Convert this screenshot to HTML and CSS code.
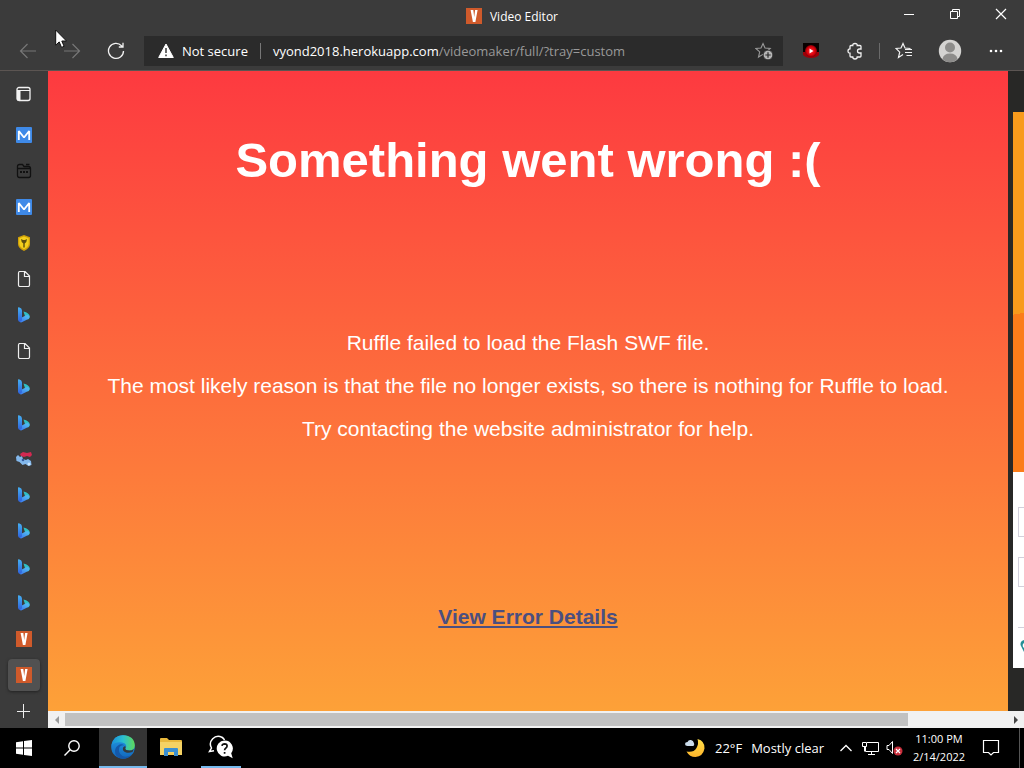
FILE: index.html
```html
<!DOCTYPE html>
<html lang="en">
<head>
<meta charset="utf-8">
<title>Video Editor</title>
<link rel="stylesheet" href="styles.css">
</head>
<body>
<svg class="sprite" aria-hidden="true">
  <defs>
    <linearGradient id="bing-a" x1="0" y1="0" x2="0" y2="1"><stop offset="0" stop-color="#45b0f2"/><stop offset="1" stop-color="#2f62dc"/></linearGradient>
    <linearGradient id="bing-b" x1="0" y1="1" x2="1" y2="0"><stop offset="0" stop-color="#3f86f0"/><stop offset="1" stop-color="#4fb4f0"/></linearGradient>
    <linearGradient id="edge-a" x1="0" y1="0" x2="1" y2="0"><stop offset="0" stop-color="#1a8fdc"/><stop offset=".5" stop-color="#2bbfd0"/><stop offset="1" stop-color="#5fd958"/></linearGradient>
    <linearGradient id="edge-b" x1="0" y1="0" x2="0" y2="1"><stop offset="0" stop-color="#2298e4"/><stop offset="1" stop-color="#1268bd"/></linearGradient>
    <linearGradient id="moon-a" x1="0" y1="0" x2="0" y2="1"><stop offset="0" stop-color="#ffe04a"/><stop offset="1" stop-color="#ffb52b"/></linearGradient>
    <radialGradient id="yt-a"><stop offset="0" stop-color="#ff2a30"/><stop offset=".7" stop-color="#d8000b"/><stop offset="1" stop-color="#7b0008"/></radialGradient>
  </defs>
  <symbol id="i-v" viewBox="0 0 16 16"><path fill="#cf5a2b" d="M0 0h16v16H0z"/><path fill="#fff" d="M4.6 2h2.700l.9 7 .9-7h2.500L9.400 14H6.900z"/></symbol>
  <symbol id="i-m" viewBox="0 0 16 16"><rect width="16" height="16" rx="1" fill="#3f8ae8"/><path d="M2.800 13V4L8 10.500 13.200 4v9" fill="none" stroke="#fff" stroke-width="1.800" stroke-linejoin="bevel"/></symbol>
  <symbol id="i-cal" viewBox="0 0 16 16"><path d="M1.500 3.500q0-2 2-2h3l1.500 2h4.500q2 0 2 2v7q0 2-2 2h-9q-2 0-2-2zM1.500 5.500H14M10 1.500h3.500" fill="none" stroke="#111" stroke-width="1.300"/><path d="M4 8h2v2H4zM7 8h2v2H7zM10 8h2v2h-2z" fill="#111"/></symbol>
  <symbol id="i-shield" viewBox="0 0 16 16"><path d="M8 0l6 2.300V9q0 4-6 7-6-3-6-7V2.300z" fill="#d0a009"/><path d="M8 1.500l4.700 1.800v5.500q0 3.200-4.700 5.500-4.700-2.300-4.700-5.500V3.300z" fill="#f3cf1d"/><path d="M5 4l2 1h2l2-1-.7 3L8.700 8.500v4H7.300v-4L5.700 7z" fill="#5b4d10"/></symbol>
  <symbol id="i-doc" viewBox="0 0 16 16"><path d="M2.500 2q0-1.500 1.500-1.500h5L13.500 5v9q0 1.500-1.500 1.500H4q-1.500 0-1.500-1.500zM8.500.5V5.500h5" fill="none" stroke="#eee" stroke-width="1.200"/></symbol>
  <symbol id="i-bing" viewBox="0 0 16 16"><path d="M7.500 4.500q5.800 1.500 6.300 4.700.3 2.300-2 3.600-.1-2.500-2.800-3.600z" fill="#2fc0c4"/><path d="M5.300 13.200l5.900-3.100" stroke="url(#bing-b)" stroke-width="4.200" stroke-linecap="round"/><path d="M2 .8Q2 0 3 .2q3 .8 3 3v9.300q0 2.300-2 2.300T2 12.500z" fill="url(#bing-a)"/></symbol>
  <symbol id="i-gem" viewBox="0 0 16 16"><path d="M0 6l2-2 2 2 2-1 1 3 3 1 2-1 3 2 .5 4-3 1-3-2-3 1-3-3-3-1z" fill="#83b8ec"/><path d="M4 3l3-2 4 1 4-1 1 3-2 2-3-1-3 1-3-1z" fill="#d32951"/><circle cx="13" cy="13" r="1.500" fill="#c9e6ff"/><circle cx="7" cy="9" r="1.300" fill="#345b9e"/></symbol>
</svg>

<div class="window">
  <header class="titlebar">
    <h1 class="window-title"><svg class="icon16"><use href="#i-v"/></svg>Video Editor</h1>
    <div class="window-controls">
      <button aria-label="Minimize"><svg width="12" height="12" viewBox="0 0 12 12"><path d="M1 6.500h10" stroke="#fff"/></svg></button>
      <button aria-label="Restore"><svg width="12" height="12" viewBox="0 0 12 12" fill="none" stroke="#fff"><path d="M1.500 3.500h7v7h-7zM3.500 3V1.500h7v7H9"/></svg></button>
      <button aria-label="Close"><svg width="12" height="12" viewBox="0 0 12 12"><path d="M1 1l10 10M11 1L1 11" stroke="#fff" stroke-width="1.200"/></svg></button>
    </div>
  </header>

  <nav class="toolbar" aria-label="Browser toolbar">
    <button aria-label="Back"><svg width="18" height="18" viewBox="0 0 18 18" fill="none" stroke="#777" stroke-width="1.200"><path d="M17 9H1.500M8.500 2L1.500 9l7 7"/></svg></button>
    <button aria-label="Forward"><svg width="18" height="18" viewBox="0 0 18 18" fill="none" stroke="#777" stroke-width="1.200"><path d="M1 9h15.500M9.500 2l7 7-7 7"/></svg></button>
    <button aria-label="Refresh"><svg width="18" height="18" viewBox="0 0 18 18" fill="none" stroke="#f2f2f2" stroke-width="1.300"><path d="M16.500 9A7.500 7.500 0 1 1 14.500 3.800L16 5M16 .8V5h-4.200"/></svg></button>
    <div class="address">
      <svg width="16" height="16" viewBox="0 0 16 16"><path d="M8 1l7.300 13.500H.7z" fill="#fff" stroke="#fff" stroke-linejoin="round"/><path d="M8 5v5M8 11.500v1.700" stroke="#2b2b2b" stroke-width="1.400"/></svg>
      <span class="security">Not secure</span>
      <span class="url"><b>vyond2018.herokuapp.com</b>/videomaker/full/?tray=custom</span>
      <button aria-label="Add to favorites"><svg width="18" height="18" viewBox="0 0 18 18"><path d="M8 1.500l2 4.500 5.200.5-3.900 3.400 1.200 5L8 12.300 3.500 15l1.200-5.100L.8 6.500 6 6z" fill="none" stroke="#999" stroke-width="1.100"/><circle cx="13" cy="13" r="4.800" fill="#b5b5b5" stroke="#2b2b2b" stroke-width=".8"/><path d="M13 10.300v5.400M10.300 13h5.400" stroke="#2b2b2b" stroke-width="1.200"/></svg></button>
    </div>
    <button aria-label="Video extension"><svg width="16" height="18" viewBox="0 0 16 18"><path fill="#080000" d="M0 1h16v10H0z"/><path fill="#9c0008" d="M0 10h16v3q-3 3-8 3t-8-3z"/><circle cx="8" cy="9" r="6" fill="url(#yt-a)"/><path d="M6.500 6.500v5L10.500 9z" fill="#fff"/></svg></button>
    <button aria-label="Extensions"><svg width="16" height="18" viewBox="0 0 16 18"><path d="M4 3.500h1.800Q5.600 1.500 8 1.500t2.200 2H13q1 0 1 1V7h-1.500Q10.500 7 10.500 9t2 2H14v3q0 1-1 1h-2.800q0 2-2.200 2t-2.200-2H4q-1 0-1-1v-2.800Q1 11.200 1 9t2-2.200V4.500q0-1 1-1z" fill="none" stroke="#f2f2f2" stroke-width="1.300"/></svg></button>
    <span class="divider"></span>
    <button aria-label="Favorites"><svg width="18" height="18" viewBox="0 0 18 18" fill="none" stroke="#f2f2f2" stroke-width="1.200"><path d="M15.500 6.500L10 6 8 1.500 6 6 1 6.500l3.700 3.600L3.500 15.500 8 12.500M10 7.500h7M10 10.500h7M11.500 13.500H17"/></svg></button>
    <button class="profile" aria-label="Profile"><svg width="24" height="24" viewBox="0 0 24 24"><circle cx="12" cy="12" r="11.200" fill="#d4d3d1"/><circle cx="12" cy="8.500" r="5" fill="#8d8c8a"/><path d="M4.500 20q1-5.500 7.500-5.500t7.500 5.500q-3 3.200-7.500 3.200T4.500 20z" fill="#8d8c8a"/></svg></button>
    <button aria-label="Settings and more"><svg width="14" height="4" viewBox="0 0 14 4" fill="#fff"><circle cx="2" cy="2" r="1.300"/><circle cx="7" cy="2" r="1.300"/><circle cx="12" cy="2" r="1.300"/></svg></button>
  </nav>

  <div class="workspace">
    <aside class="tabs" aria-label="Vertical tabs">
      <button class="tab-menu" aria-label="Tab actions"><svg width="16" height="16" viewBox="0 0 16 16"><rect x="1" y="1.500" width="13" height="13" rx="2" fill="none" stroke="#f2f2f2" stroke-width="1.300"/><path d="M1 4.500h13" stroke="#f2f2f2"/><path d="M1 4.500h3.500v10H1z" fill="#f2f2f2"/></svg></button>
      <button aria-label="Tab"><svg class="icon16"><use href="#i-m"/></svg></button>
      <button aria-label="Tab"><svg class="icon16"><use href="#i-cal"/></svg></button>
      <button aria-label="Tab"><svg class="icon16"><use href="#i-m"/></svg></button>
      <button aria-label="Tab"><svg class="icon16"><use href="#i-shield"/></svg></button>
      <button aria-label="Tab"><svg class="icon16"><use href="#i-doc"/></svg></button>
      <button aria-label="Tab"><svg class="icon16"><use href="#i-bing"/></svg></button>
      <button aria-label="Tab"><svg class="icon16"><use href="#i-doc"/></svg></button>
      <button aria-label="Tab"><svg class="icon16"><use href="#i-bing"/></svg></button>
      <button aria-label="Tab"><svg class="icon16"><use href="#i-bing"/></svg></button>
      <button aria-label="Tab"><svg class="icon16"><use href="#i-gem"/></svg></button>
      <button aria-label="Tab"><svg class="icon16"><use href="#i-bing"/></svg></button>
      <button aria-label="Tab"><svg class="icon16"><use href="#i-bing"/></svg></button>
      <button aria-label="Tab"><svg class="icon16"><use href="#i-bing"/></svg></button>
      <button aria-label="Tab"><svg class="icon16"><use href="#i-bing"/></svg></button>
      <button aria-label="Tab"><svg class="icon16"><use href="#i-v"/></svg></button>
      <button class="active" aria-label="Video Editor"><svg class="icon16"><use href="#i-v"/></svg></button>
      <button class="new-tab" aria-label="New tab"><svg width="14" height="14" viewBox="0 0 14 14"><path d="M6.500 0v14M0 7.500h13" stroke="#eee"/></svg></button>
    </aside>

    <main class="viewport">
      <div class="page">
        <section class="panic">
          <h2 class="panic-title">Something went wrong :(</h2>
          <div class="panic-body">
            <p>Ruffle failed to load the Flash SWF file.</p>
            <p>The most likely reason is that the file no longer exists, so there is nothing for Ruffle to load.</p>
            <p>Try contacting the website administrator for help.</p>
          </div>
          <div class="panic-footer"><a href="#">View Error Details</a></div>
        </section>
        <aside class="panel">
          <div class="panel-banner"></div>
          <div class="panel-content">
            <div class="panel-field"></div>
            <div class="panel-field"></div>
            <div class="panel-foot"><svg width="6" height="14" viewBox="0 0 6 14"><path d="M6 0Q2 1 2.500 5L6 12z" fill="#248f96"/><path d="M6 3Q4 4 5 7l1 1z" fill="#fff"/></svg></div>
          </div>
        </aside>
      </div>
      <div class="scrollbar">
        <button aria-label="Scroll left"><svg width="4" height="8" viewBox="0 0 4 8"><path d="M4 0v8L0 4z" fill="#999"/></svg></button>
        <div class="track"><div class="thumb"></div></div>
        <button aria-label="Scroll right"><svg width="4" height="8" viewBox="0 0 4 8"><path d="M0 0v8l4-4z" fill="#444"/></svg></button>
      </div>
    </main>
  </div>

  <footer class="taskbar">
    <button aria-label="Start"><svg width="16" height="16" viewBox="0 0 16 16" fill="#fff"><path d="M0 2.300L7 1.300V7.500H0zM8 1.100L16 0v7.500H8zM0 8.500h7v6.200l-7-1zM8 8.500h8V16l-8-1.100z"/></svg></button>
    <button class="search" aria-label="Search"><svg width="16" height="16" viewBox="0 0 16 16" fill="none" stroke="#fff" stroke-width="1.400"><circle cx="10" cy="6" r="5.200"/><path d="M6.200 9.800L.5 15.500"/></svg></button>
    <button class="app current" aria-label="Microsoft Edge"><svg width="24" height="24" viewBox="0 0 24 24"><circle cx="12" cy="12" r="11.800" fill="url(#edge-b)"/><path d="M.5 10.500Q2 .3 12 .2 23.500.7 23.800 10.500q-.3 5-5.300 5-4.300 0-4.200-2.200 1.400-1.400.7-3.300-1-2.500-4-2.500Q4.500 6.500.5 10.500z" fill="url(#edge-a)"/><path d="M8.500 12q-2 6 3 9 4 2 9-1-3.500 4-8.500 3.800Q3.500 23 4 15.500q.5-4 4.500-6 3-.8 4.800 1-3.500-.6-4.800 1.500z" fill="#1458a9"/><path d="M14.300 13.300q-.1 2.200 4.200 2.200 2.500 0 4.300-1.500l-1.300 3q-4 1.500-7 .3-3.300-1.500-2.500-4.500 1-2 2.300-1.500.8.800 0 2z" fill="#333a3d"/></svg></button>
    <button class="app" aria-label="File Explorer"><svg width="22" height="18" viewBox="0 0 22 18"><path d="M0 1q0-1 1-1h6l2 2h12q1 0 1 1v14H0z" fill="#e9b83c"/><path d="M0 4h22v13H0z" fill="#f5d264"/><path d="M4 18v-7q0-1 1-1h12q1 0 1 1v7h-4v-4H8v4z" fill="#3b8fd1"/><path d="M9 15h4v2H9z" fill="#f5c951"/></svg></button>
    <button class="app running" aria-label="Get Help"><svg width="26" height="24" viewBox="0 0 26 24"><path d="M14 2.300A7.800 7.800 0 0 0 3.500 13L1.500 16.500l4.500-.7" fill="none" stroke="#fff" stroke-width="1.500"/><path d="M13.500 2q2.300 1.200 3 3" fill="none" stroke="#fff" stroke-width="1.500"/><path d="M16.500 5.500a8 8 0 1 0 3.500 15.300l4.700 2.500-1.500-5A8 8 0 0 0 16.500 5.500z" fill="#fff"/><path d="M14 10.800q.3-2 2.600-2 2.500.1 2.500 2.200 0 1.300-1.400 2.200-1.100.7-1.100 2M16.600 17v1.800" fill="none" stroke="#111" stroke-width="1.700"/></svg></button>
    <div class="tray">
      <button class="weather"><svg width="22" height="22" viewBox="0 0 22 22"><path d="M13.500 2Q21 4 20.500 11.500 19 19.500 11.500 20 5.500 20 2.500 14.500q7 1.500 10-3.500 2.500-4.500 1-9z" fill="url(#moon-a)"/><path d="M3.500 9Q1 9 1 7t2.500-2Q4.500 2.500 7 3t2.700 2.500Q11 7 9.500 9z" fill="#cbdceb"/></svg><span>22°F</span><span>Mostly clear</span></button>
      <button aria-label="Show hidden icons"><svg width="12" height="8" viewBox="0 0 12 8"><path d="M.5 7L6 1.500 11.500 7" fill="none" stroke="#fff" stroke-width="1.300"/></svg></button>
      <button aria-label="Network"><svg width="17" height="16" viewBox="0 0 17 16" fill="none" stroke="#fff"><path d="M5 2.500h11.500v9H3.500V7M9.500 12v2.500M6 14.500h7M.5 2.500h4v4h-4zM2.500 6.500v5"/></svg></button>
      <button aria-label="Volume muted"><svg width="17" height="16" viewBox="0 0 17 16"><path d="M1 5.500h2L6.500 1.500v12L3 9.500H1z" fill="none" stroke="#fff"/><circle cx="12" cy="11" r="4.500" fill="#c92f3c"/><path d="M10 9l4 4M14 9l-4 4" stroke="#fff" stroke-width="1.200"/></svg></button>
      <button class="clock"><span>11:00 PM</span><span>2/14/2022</span></button>
      <button class="notices" aria-label="Notifications"><svg width="18" height="18" viewBox="0 0 18 18"><path d="M1.500 1.500h15v12h-5L9 16l-2.500-2.500h-5z" fill="none" stroke="#fff" stroke-width="1.200"/></svg></button>
      <span class="desktop-edge"></span>
    </div>
  </footer>
  <svg class="cursor" width="12" height="20" viewBox="0 0 12 20"><path d="M.7 1v15.200l3.500-3.300 2.300 5.500 2.600-1.100-2.300-5.300h4.700z" fill="#fff" stroke="#111"/></svg>
</div>
</body>
</html>
```
FILE: styles.css
```css
* {
  box-sizing: border-box;
}

body {
  margin: 0;
  font-family: "Open Sans", "Noto Sans", sans-serif;
  font-size: 13px;
  color: #fff;
  background: #3b3b3b;
}

h1, h2, p {
  margin: 0;
}

button {
  display: flex;
  align-items: center;
  justify-content: center;
  margin: 0;
  padding: 0;
  border: 0;
  background: none;
  color: inherit;
  font: inherit;
}

svg {
  display: block;
  flex: none;
}

.sprite {
  position: absolute;
  width: 0;
  height: 0;
}

.icon16 {
  width: 16px;
  height: 16px;
}

.window {
  position: relative;
  display: flex;
  flex-direction: column;
  min-height: 100vh;
}

/* Title bar */
.titlebar {
  display: grid;
  grid-template-columns: 1fr auto 1fr;
  height: 32px;
}

.window-title {
  grid-column: 2;
  display: flex;
  align-items: center;
  gap: 8px;
  font-size: 12px;
  font-weight: 400;
}

.window-controls {
  display: flex;
  justify-content: flex-end;
}

.window-controls button {
  width: 46px;
  height: 28px;
}

/* Toolbar */
.toolbar {
  display: flex;
  align-items: center;
  height: 39px;
  padding: 0 6px;
  border-bottom: 1px solid #5c5552;
}

.toolbar > button {
  width: 44px;
  height: 32px;
}

.toolbar > .profile {
  width: 48px;
}

.address {
  flex: 1;
  display: flex;
  align-items: center;
  min-width: 0;
  height: 30px;
  margin: 0 6px;
  padding: 0 10px 0 14px;
  background: #2b2b2b;
}

.security {
  margin-left: 8px;
  padding-right: 12px;
  border-right: 1px solid #777;
  line-height: 16px;
  white-space: nowrap;
}

.url {
  flex: 1;
  padding-left: 12px;
  color: #999;
  white-space: nowrap;
}

.url b {
  color: #fff;
  font-weight: 400;
}

.divider {
  width: 1px;
  height: 16px;
  margin: 0 2px;
  background: #6a6a6a;
}

/* Tabs and page */
.workspace {
  flex: 1;
  display: flex;
}

.tabs {
  display: flex;
  flex-direction: column;
  align-items: center;
  width: 48px;
}

.tabs button {
  width: 32px;
  height: 32px;
  margin: 2px 0;
  border-radius: 4px;
}

.tabs .tab-menu {
  height: 46px;
  margin: 0;
}

.tabs .active {
  background: #515151;
  box-shadow: 0 1px 3px #222;
}

.tabs .new-tab {
  height: 35px;
  margin: 0;
}

.viewport {
  flex: 1;
  display: flex;
  flex-direction: column;
  min-width: 0;
}

.page {
  flex: 1;
  display: flex;
  gap: 5px;
  background: #282826;
}

.panic {
  flex: 1;
  display: flex;
  flex-direction: column;
  font-family: "Liberation Sans", Arial, sans-serif;
  font-size: 21px;
  text-align: center;
  background: linear-gradient(180deg, #fd3a40 0%, #fda138 100%);
}

.panic-title {
  font-size: 49px;
  line-height: 178px;
}

.panic-body {
  flex: 1;
  display: flex;
  flex-direction: column;
  justify-content: center;
  padding-bottom: 2px;
  line-height: 43px;
}

.panic-footer {
  line-height: 188px;
}

.panic-footer a {
  color: #4b4f80;
  font-weight: 700;
}

.panel {
  display: flex;
  flex-direction: column;
  width: 11px;
  margin: 41px 0 43px;
}

.panel-banner {
  height: 360px;
  background: linear-gradient(170deg, #f89b1c 0 56%, #fb7d1a 56% 100%);
}

.panel-content {
  flex: 1;
  display: flex;
  flex-direction: column;
  gap: 20px;
  padding: 35px 0 0 5px;
  background: #fff;
}

.panel-field {
  height: 30px;
  border: 1px solid #d2d0dc;
  border-right: 0;
}

.panel-foot {
  margin-top: 20px;
  padding-top: 12px;
  border-top: 1px solid #d2d0dc;
}

.scrollbar {
  display: flex;
  height: 17px;
  background: #f1f1f1;
}

.scrollbar button {
  width: 17px;
}

.track {
  flex: 1;
  padding: 2px 0;
}

.thumb {
  width: 89.5%;
  height: 13px;
  background: #c1c1c1;
}

/* Taskbar */
.taskbar {
  display: flex;
  height: 40px;
  background: #000;
}

.taskbar > button {
  width: 48px;
}

.taskbar .search {
  margin-right: 3px;
}

.app {
  border-bottom: 2px solid transparent;
}

.current {
  background: #353535;
  border-bottom-color: #76b9ed;
}

.running {
  margin-left: 2px;
  background: linear-gradient(#76b9ed, #76b9ed) center bottom / 40px 2px no-repeat border-box;
}

.tray {
  display: flex;
  margin-left: auto;
}

.tray > button {
  width: 24px;
}

.tray > .weather {
  width: auto;
  gap: 9px;
  margin-right: 10px;
}

.tray > .clock {
  flex-direction: column;
  width: 66px;
  font-size: 11px;
  line-height: 18px;
}

.tray > .notices {
  width: 38px;
}

.desktop-edge {
  width: 5px;
  margin-left: 9px;
  border-left: 1px solid #555;
}

.cursor {
  position: absolute;
  left: 55px;
  top: 29px;
}
```
